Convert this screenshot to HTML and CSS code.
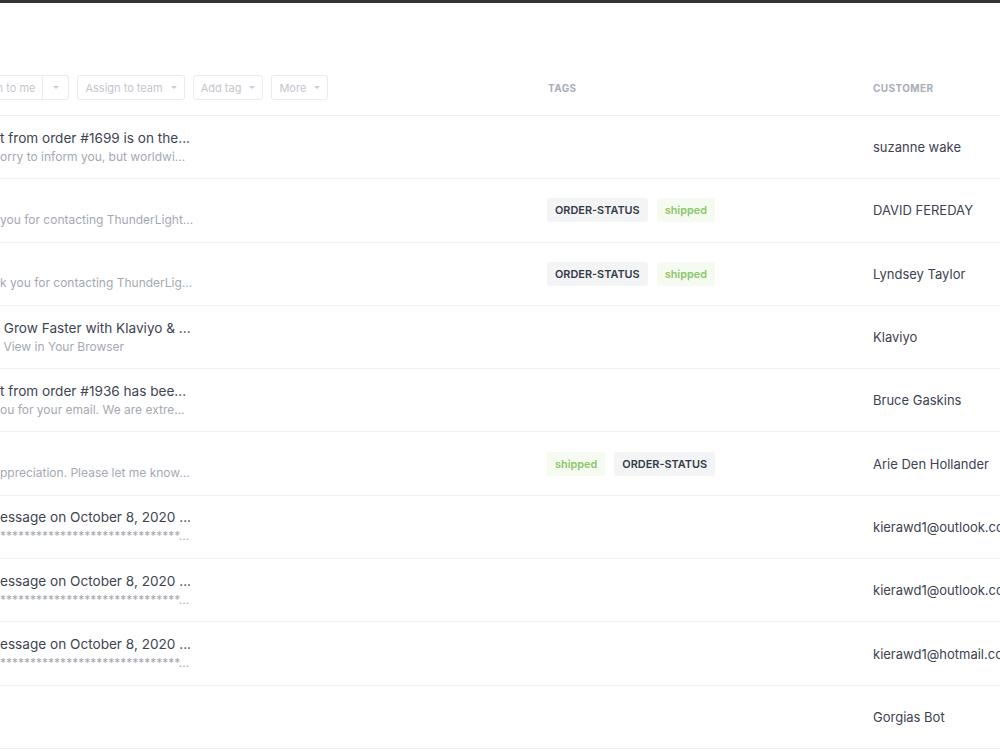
FILE: index.html
```html
<!DOCTYPE html>
<html lang="en">
<head>
  <meta charset="UTF-8" />
  <title>Tickets</title>
  <link rel="stylesheet" href="styles.css">
</head>
<body>

  <div class="topbar"></div>

  <div class="table">
    <div class="row head">
      <div class="cell subject">
        <div class="toolbar">
          <div class="btn-group">
            <button class="btn">Assign to me</button>
            <button class="btn caret-only"><span class="caret"></span></button>
          </div>
          <button class="btn">Assign to team <span class="caret"></span></button>
          <button class="btn">Add tag <span class="caret"></span></button>
          <button class="btn">More <span class="caret"></span></button>
        </div>
      </div>
      <div class="cell th">TAGS</div>
      <div class="cell th">CUSTOMER</div>
    </div>

    <div class="row">
      <div class="cell subject">
        <div class="title">t from order #1699 is on the...</div>
        <div class="preview">orry to inform you, but worldwi...</div>
      </div>
      <div class="cell tags"></div>
      <div class="cell customer">suzanne wake</div>
    </div>

    <div class="row">
      <div class="cell subject">
        <div class="title">&nbsp;</div>
        <div class="preview">you for contacting ThunderLight...</div>
      </div>
      <div class="cell tags">
        <span class="tag">ORDER-STATUS</span>
        <span class="tag green">shipped</span>
      </div>
      <div class="cell customer">DAVID FEREDAY</div>
    </div>

    <div class="row">
      <div class="cell subject">
        <div class="title">&nbsp;</div>
        <div class="preview">k you for contacting ThunderLig...</div>
      </div>
      <div class="cell tags">
        <span class="tag">ORDER-STATUS</span>
        <span class="tag green">shipped</span>
      </div>
      <div class="cell customer">Lyndsey Taylor</div>
    </div>

    <div class="row">
      <div class="cell subject">
        <div class="title">&nbsp;Grow Faster with Klaviyo &amp; ...</div>
        <div class="preview">&nbsp;View in Your Browser</div>
      </div>
      <div class="cell tags"></div>
      <div class="cell customer">Klaviyo</div>
    </div>

    <div class="row">
      <div class="cell subject">
        <div class="title">t from order #1936 has bee...</div>
        <div class="preview">ou for your email. We are extre...</div>
      </div>
      <div class="cell tags"></div>
      <div class="cell customer">Bruce Gaskins</div>
    </div>

    <div class="row">
      <div class="cell subject">
        <div class="title">&nbsp;</div>
        <div class="preview">ppreciation. Please let me know...</div>
      </div>
      <div class="cell tags">
        <span class="tag green">shipped</span>
        <span class="tag">ORDER-STATUS</span>
      </div>
      <div class="cell customer">Arie Den Hollander</div>
    </div>

    <div class="row">
      <div class="cell subject">
        <div class="title">essage on October 8, 2020 ...</div>
        <div class="preview">******************************...</div>
      </div>
      <div class="cell tags"></div>
      <div class="cell customer">kierawd1@outlook.com</div>
    </div>

    <div class="row">
      <div class="cell subject">
        <div class="title">essage on October 8, 2020 ...</div>
        <div class="preview">******************************...</div>
      </div>
      <div class="cell tags"></div>
      <div class="cell customer">kierawd1@outlook.com</div>
    </div>

    <div class="row">
      <div class="cell subject">
        <div class="title">essage on October 8, 2020 ...</div>
        <div class="preview">******************************...</div>
      </div>
      <div class="cell tags"></div>
      <div class="cell customer">kierawd1@hotmail.com</div>
    </div>

    <div class="row">
      <div class="cell subject">
        <div class="title">&nbsp;</div>
        <div class="preview">&nbsp;</div>
      </div>
      <div class="cell tags"></div>
      <div class="cell customer">Gorgias Bot</div>
    </div>
  </div>

</body>
</html>
```

FILE: styles.css
```css
* {
  margin: 0;
  padding: 0;
  box-sizing: border-box;
  font-family: 'Inter', 'Noto Sans', sans-serif;
}

body {
  background: #fff;
  color: #3d4250;
  overflow: hidden;
  width: 1000px;
  height: 750px;
}

.topbar {
  height: 3px;
  background: #333436;
}

.table {
  margin-top: 57px;
  width: 1000px;
  overflow: hidden;
}

.row {
  display: grid;
  grid-template-columns: 548px 325px 1fr;
  align-items: center;
  height: 63.3px;
  border-bottom: 1px solid #eef0f3;
}

.row.head {
  height: 56px;
  border-bottom: 1px solid #eceef1;
}

.cell {
  white-space: nowrap;
  overflow: hidden;
}

.th {
  font-size: 10px;
  font-weight: 700;
  color: #a9adb8;
  letter-spacing: 0.4px;
}

/* toolbar */
.toolbar {
  display: flex;
  gap: 8px;
  margin-left: -40px;
}

.btn-group {
  display: flex;
}

.btn {
  height: 25px;
  padding: 0 7px;
  background: #fff;
  border: 1px solid #e9ebee;
  border-radius: 3px;
  color: #c3c6cd;
  font-size: 11px;
  display: flex;
  align-items: center;
  gap: 8px;
}

.btn-group .btn:first-child {
  border-radius: 3px 0 0 3px;
}

.btn-group .caret-only {
  border-left: none;
  border-radius: 0 3px 3px 0;
  width: 26px;
  justify-content: center;
}

.caret {
  display: inline-block;
  width: 0;
  height: 0;
  border-left: 3px solid transparent;
  border-right: 3px solid transparent;
  border-top: 3px solid #c9ccd2;
}

/* subject */
.title {
  font-size: 13.6px;
  line-height: 19px;
  color: #3e4452;
}

.preview {
  font-size: 12px;
  line-height: 18px;
  color: #a5a9b3;
}

/* tags */
.tags {
  display: flex;
  gap: 9px;
  margin-left: -1px;
}

.tag {
  display: inline-block;
  height: 24px;
  line-height: 24px;
  padding: 0 8px;
  border-radius: 3px;
  background: #f3f4f6;
  color: #353a45;
  font-size: 10.9px;
  font-weight: 600;
}

.tag.green {
  background: #f6fbf2;
  color: #8bc66a;
}

.customer {
  font-size: 13px;
  color: #3d4250;
}
```
